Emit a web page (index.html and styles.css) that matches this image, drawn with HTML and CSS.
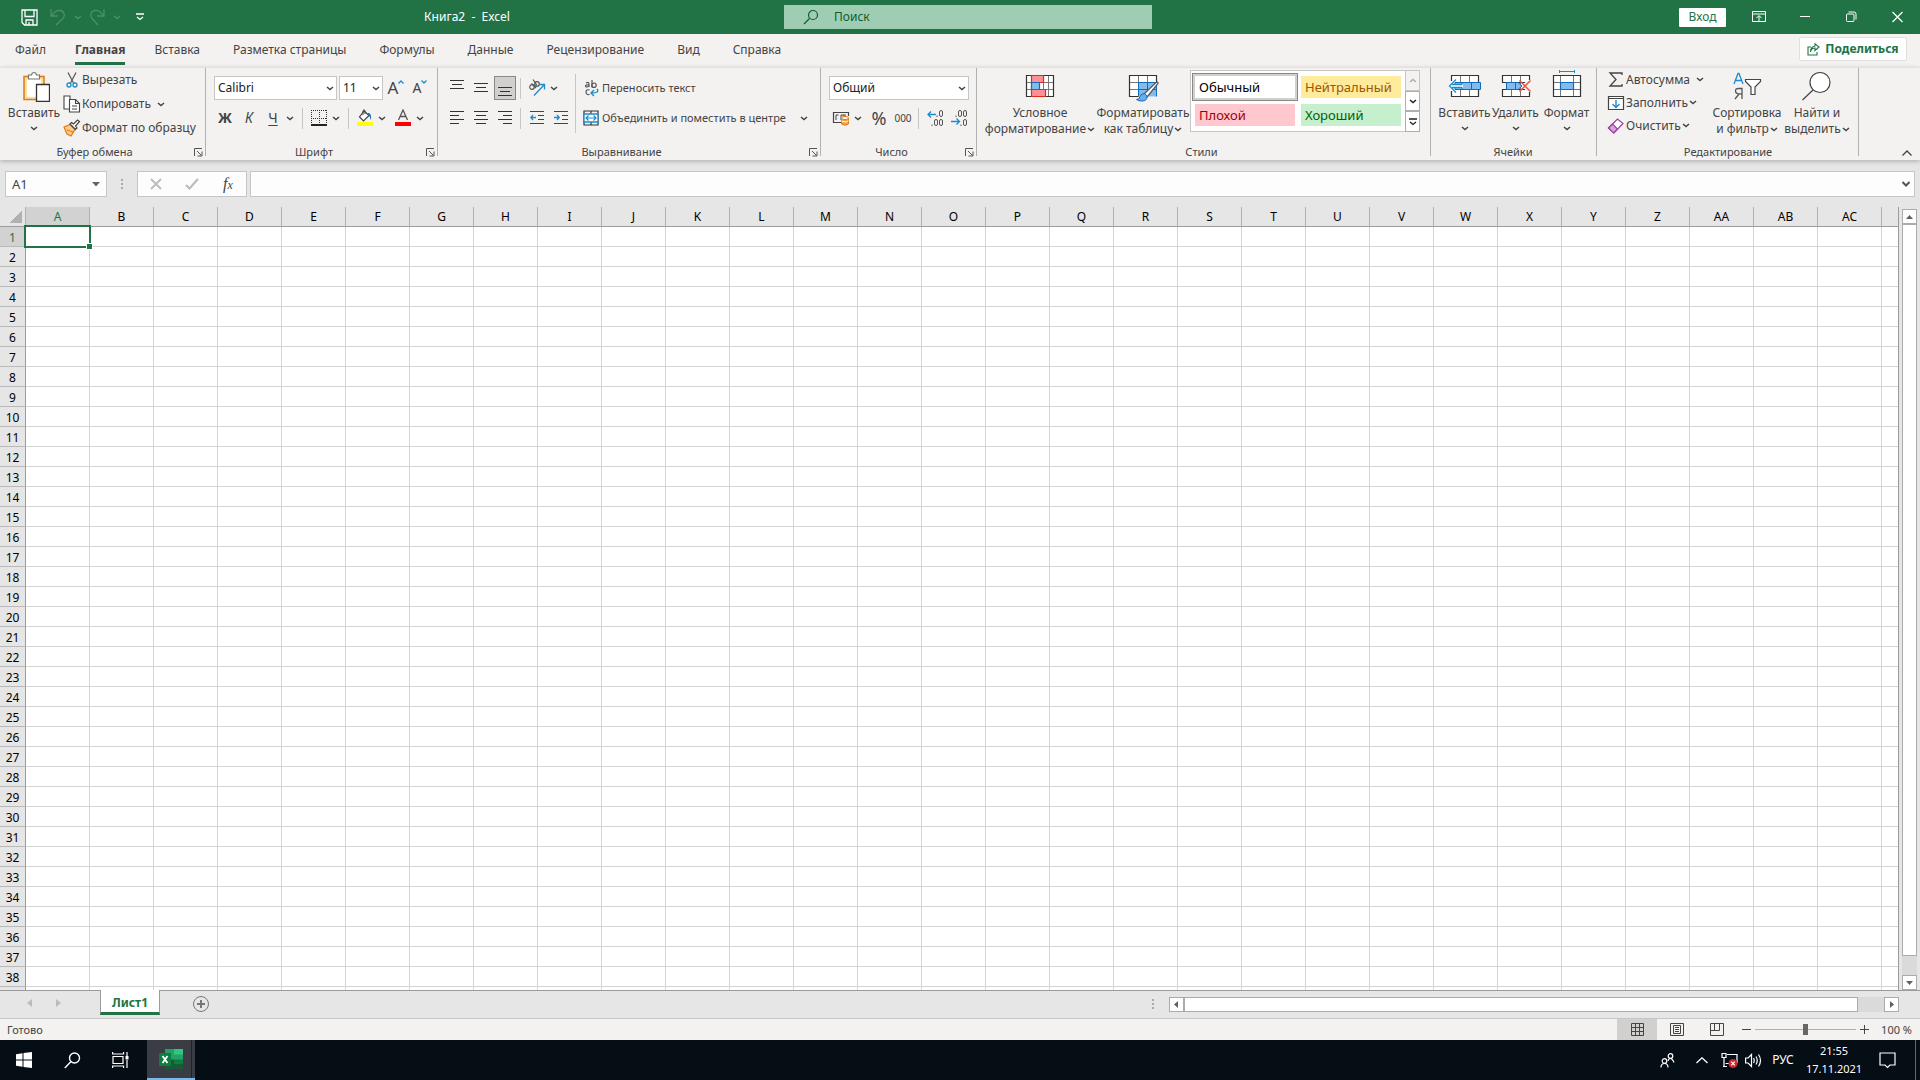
FILE: index.html
```html
<!DOCTYPE html>
<html lang="ru">
<head>
<meta charset="utf-8">
<title>Книга2 - Excel</title>
<link rel="stylesheet" href="styles.css">
</head>
<body>
<svg class="defs" aria-hidden="true">
  <symbol id="chev" viewBox="0 0 8 5"><path d="M1 1l3 2.500 3-2.500" fill="none" stroke="currentColor" stroke-width="1.500"/></symbol>
  <symbol id="launch" viewBox="0 0 9 9"><path d="M.5 8V.5H8M3 3l4.500 4.500M8 3.500V8H3.500" fill="none" stroke="#555"/></symbol>
</svg>

<header class="titlebar">
  <div class="title-left">
    <div class="qat">
      <button class="qbtn" aria-label="Сохранить"><svg width="17" height="17" viewBox="0 0 17 17" fill="none" stroke="#fff" stroke-width="1.300"><path d="M1 1h15v15H3.500L1 13.500zM4 1v6.500h9V1M5 16v-5h7v5M8 13v3"/></svg></button>
      <button class="qbtn dim" aria-label="Отменить"><svg width="16" height="18" viewBox="0 0 16 18" fill="none" stroke="currentColor" stroke-width="1.300"><path d="M1 1v7h7M1.500 7.500C5 3 8 2 10.500 2.500c4 1 5 5 2.500 8L6 17"/></svg></button>
      <button class="qdrop dim" aria-label="Список отмены"><svg width="8" height="5"><use href="#chev"/></svg></button>
      <button class="qbtn dim" aria-label="Повторить"><svg width="16" height="18" viewBox="0 0 16 18" fill="none" stroke="currentColor" stroke-width="1.300"><path d="M15 1v7H8M14.500 7.500C11 3 8 2 5.500 2.500c-4 1-5 5-2.500 8L9 17"/></svg></button>
      <button class="qdrop dim" aria-label="Список повтора"><svg width="8" height="5"><use href="#chev"/></svg></button>
      <button class="qdrop more" aria-label="Настройка панели"><svg width="8" height="8" viewBox="0 0 8 8" fill="none" stroke="#fff" stroke-width="1.300"><path d="M0 1h8M1 4l3 2.500L7 4"/></svg></button>
    </div>
    <h1 class="doc-title">Книга2&nbsp; -&nbsp; Excel</h1>
  </div>
  <label class="search">
    <svg width="16" height="16" viewBox="0 0 16 16" fill="none" stroke="#0e5c2f" stroke-width="1.200"><circle cx="10" cy="6" r="4.500"/><path d="M6.500 9.500L1 15"/></svg>
    <input type="search" placeholder="Поиск" aria-label="Поиск">
  </label>
  <div class="title-right">
    <button class="login">Вход</button>
    <button class="wbtn" aria-label="Параметры ленты"><svg width="14" height="12" viewBox="0 0 14 12" fill="none" stroke="#fff"><path d="M.5.5h13v10H.5zM.5 3h13M7 10V5M4.500 7L7 4.500 9.500 7"/></svg></button>
    <button class="wbtn" aria-label="Свернуть"><svg width="10" height="12" viewBox="0 0 10 12" stroke="#fff"><path d="M0 5.500h10"/></svg></button>
    <button class="wbtn" aria-label="Восстановить"><svg width="11" height="12" viewBox="0 0 11 12" fill="none" stroke="#fff"><rect x=".5" y="3" width="7.500" height="7.500" rx="1"/><path d="M2.500 1H8q2 0 2 2v5.500"/></svg></button>
    <button class="wbtn" aria-label="Закрыть"><svg width="11" height="12" viewBox="0 0 11 12" stroke="#fff" stroke-width="1.200"><path d="M.5 1l10 10M10.500 1l-10 10"/></svg></button>
  </div>
</header>

<nav class="tabs">
  <a href="#file">Файл</a>
  <a href="#home" class="active">Главная</a>
  <a href="#insert">Вставка</a>
  <a href="#layout">Разметка страницы</a>
  <a href="#formulas">Формулы</a>
  <a href="#data">Данные</a>
  <a href="#review">Рецензирование</a>
  <a href="#view">Вид</a>
  <a href="#help">Справка</a>
  <button class="share"><svg width="13" height="13" viewBox="0 0 13 13" fill="none" stroke="#217346" stroke-width="1.100"><path d="M4 4H1v8h9V9M3.500 9C4 6 5.500 5 8 5V7.500L12 4 8 .8V3C5 3.500 3.500 5.500 3.500 9z"/></svg>Поделиться</button>
</nav>

<main class="ribbon">
  <section class="group g-clip">
    <div class="body">
      <button class="big w56">
        <svg class="art" width="32" height="32" viewBox="0 0 32 32"><path d="M6 6.500h20v23H6z" fill="#fddfa0" stroke="#e07a12" stroke-width="1.500"/><path d="M9 9h14v18H9z" fill="#fff"/><path d="M10.500 9V5h3q.5-2.500 2.500-2.500T18.500 5h3v4z" fill="#fff" stroke="#777" stroke-width="1.200"/><path d="M18.500 14.500h13v17h-13z" fill="#fff" stroke="#333" stroke-width="1.300"/></svg>
        <span>Вставить</span><svg class="chev" width="8" height="5"><use href="#chev"/></svg>
      </button>
      <div class="stack clip">
        <button class="row"><svg width="18" height="18" viewBox="0 0 18 18" fill="none"><path d="M5 1.500l5.500 10.500M13 1.500L7.500 12" stroke="#555" stroke-width="1.200"/><circle cx="6" cy="14" r="2" stroke="#1e8bcd" stroke-width="1.300"/><circle cx="12" cy="14" r="2" stroke="#1e8bcd" stroke-width="1.300"/></svg>Вырезать</button>
        <button class="row"><svg width="18" height="18" viewBox="0 0 18 18" fill="#fff" stroke="#444" stroke-width="1.100"><path d="M1 1h6v13H1z"/><path d="M6.500 4.500h6l4 4v8.500h-10z"/><path d="M12.500 4.500v4h4M9 11h5M9 14h5" fill="none"/></svg>Копировать<svg class="chev near" width="8" height="5"><use href="#chev"/></svg></button>
        <button class="row"><svg width="18" height="18" viewBox="0 0 18 18"><path d="M1 8l6-2.500 5 5-4 6.500-4-2z" fill="#fdc98a" stroke="#e07a12" stroke-width="1.200"/><path d="M4 11l6 2" stroke="#e07a12"/><path d="M7 5l5.500 5.500 1.500-1.500-1.500-2 4-4.500L14.500 1l-4 4-2-1.500z" fill="#fff" stroke="#444" stroke-width="1.200"/></svg>Формат по образцу</button>
      </div>
    </div>
    <footer class="with-launch">Буфер обмена<button class="launch" aria-label="Параметры буфера"><svg width="9" height="9"><use href="#launch"/></svg></button></footer>
  </section>

  <section class="group g-font">
    <div class="body rows">
      <div class="line">
        <span class="combo w123"><select aria-label="Шрифт"><option>Calibri</option></select><svg class="chev" width="8" height="5"><use href="#chev"/></svg></span>
        <span class="combo w44"><select aria-label="Размер"><option>11</option></select><svg class="chev" width="8" height="5"><use href="#chev"/></svg></span>
        <button class="ib size-up" aria-label="Увеличить шрифт"><b>A</b><svg width="6" height="4" viewBox="0 0 6 4" fill="none" stroke="#1e8bcd" stroke-width="1.300"><path d="M.5 3.500L3 1l2.500 2.500"/></svg></button>
        <button class="ib size-down" aria-label="Уменьшить шрифт"><b>A</b><svg width="6" height="4" viewBox="0 0 6 4" fill="none" stroke="#1e8bcd" stroke-width="1.300"><path d="M.5.5L3 3 5.500.5"/></svg></button>
      </div>
      <div class="line">
        <button class="ib bold">Ж</button><button class="ib ital">К</button><button class="ib und">Ч</button><button class="dd" aria-label="Подчёркивание"><svg width="8" height="5"><use href="#chev"/></svg></button>
        <i class="sep"></i>
        <button class="ib" aria-label="Границы"><svg width="16" height="16" viewBox="0 0 16 16" fill="none" stroke="#333" shape-rendering="crispEdges"><path d="M0 .5h16M.5 0v15M15.500 0v15M8.500 0v15M0 8.500h16" stroke-dasharray="1 1"/><path d="M0 15h16" stroke="#222" stroke-width="2"/></svg></button><button class="dd" aria-label="Виды границ"><svg width="8" height="5"><use href="#chev"/></svg></button>
        <i class="sep"></i>
        <button class="ib" aria-label="Цвет заливки"><svg width="16" height="18" viewBox="0 0 16 18"><path d="M7 2L2.500 8l4 4L12 6.500z" fill="#fff" stroke="#444" stroke-width="1.200"/><path d="M6 6V1.500Q7 0 8 1.500V5" fill="none" stroke="#444"/><path d="M11 4c2.500 0 3.500 2 3 7-1.500-3-1-4-3-5z" fill="#1e6fb8"/><path d="M0 13h16v4H0z" fill="#ff0"/></svg></button><button class="dd" aria-label="Цвета заливки"><svg width="8" height="5"><use href="#chev"/></svg></button>
        <button class="ib" aria-label="Цвет текста"><svg width="16" height="18" viewBox="0 0 16 18"><path d="M3.500 11L8 1l4.500 10M5 7.500h6" fill="none" stroke="#555" stroke-width="1.300"/><path d="M0 13h16v4H0z" fill="red"/></svg></button><button class="dd" aria-label="Цвета текста"><svg width="8" height="5"><use href="#chev"/></svg></button>
      </div>
    </div>
    <footer class="with-launch">Шрифт<button class="launch" aria-label="Параметры шрифта"><svg width="9" height="9"><use href="#launch"/></svg></button></footer>
  </section>

  <section class="group g-align">
    <div class="body">
      <div class="rows">
        <div class="line">
          <button class="ib" aria-label="По верхнему краю"><svg class="crisp" width="14" height="18"><path d="M0 1.500h14M2 5.500h10M0 9.500h14"/></svg></button>
          <button class="ib" aria-label="По середине"><svg class="crisp" width="14" height="18"><path d="M0 4.500h14M2 8.500h10M0 12.500h14"/></svg></button>
          <button class="ib on" aria-label="По нижнему краю"><svg class="crisp" width="14" height="18"><path d="M0 8.500h14M2 12.500h10M0 16.500h14"/></svg></button>
          <i class="sep"></i>
          <button class="ib" aria-label="Ориентация"><svg width="18" height="18" viewBox="0 0 18 18" fill="none"><g stroke="#555" stroke-width="1.200"><circle cx="4" cy="8" r="2.300"/><path d="M3.500 4.500L8 9"/><circle cx="9" cy="5" r="2.300"/><path d="M5 .5l4 6"/></g><path d="M6 16.500L16 6M11.500 5.500H16.500V10.500" stroke="#1e8bcd" stroke-width="1.300"/></svg></button><button class="dd" aria-label="Варианты ориентации"><svg width="8" height="5"><use href="#chev"/></svg></button>
        </div>
        <div class="line">
          <button class="ib" aria-label="По левому краю"><svg class="crisp" width="14" height="14"><path d="M0 .5h14M0 4.500h9M0 8.500h14M0 12.500h9"/></svg></button>
          <button class="ib" aria-label="По центру"><svg class="crisp" width="14" height="14"><path d="M0 .5h14M2 4.500h10M0 8.500h14M2 12.500h10"/></svg></button>
          <button class="ib" aria-label="По правому краю"><svg class="crisp" width="14" height="14"><path d="M0 .5h14M5 4.500h9M0 8.500h14M5 12.500h9"/></svg></button>
          <i class="sep"></i>
          <button class="ib" aria-label="Уменьшить отступ"><svg width="14" height="14" viewBox="0 0 14 14" fill="none" stroke="#444"><path d="M0 .5h14M8 4.500h6M8 8.500h6M0 12.500h14"/><path d="M1 6.500h5M3 4L.8 6.500 3 9" stroke="#1e8bcd" stroke-width="1.300"/></svg></button>
          <button class="ib" aria-label="Увеличить отступ"><svg width="14" height="14" viewBox="0 0 14 14" fill="none" stroke="#444"><path d="M0 .5h14M8 4.500h6M8 8.500h6M0 12.500h14"/><path d="M0 6.500h5M3 4l2.200 2.500L3 9" stroke="#1e8bcd" stroke-width="1.300"/></svg></button>
        </div>
      </div>
      <i class="long-sep"></i>
      <div class="rows wide">
        <button class="row"><svg width="17" height="18" viewBox="0 0 17 18" fill="none" stroke="#555" stroke-width="1.200"><path d="M3 4q3-1.500 3 1v3M6 6q-3.500-.5-3.500 1T6 7.500M9 1v7.500"/><circle cx="11" cy="6.200" r="2.200"/><path d="M6.500 11Q3 10 3 13t3.500 2.500"/><path d="M14 10q3 4-5.500 4M11 11l-3 3 3 3" stroke="#1e8bcd" stroke-width="1.400"/></svg>Переносить текст</button>
        <button class="row"><svg width="17" height="16" viewBox="0 0 17 16" fill="none"><path d="M1 1h14v14H1zM8 1v3M8 12v3" stroke="#333" stroke-width="1.200"/><path d="M1 4h14v8H1z" fill="#fff" stroke="#1e8bcd" stroke-width="1.300"/><path d="M3 8h10M5.500 5.500L3 8l2.500 2.500M10.500 5.500L13 8l-2.500 2.500" stroke="#1e8bcd" stroke-width="1.200"/></svg>Объединить и поместить в центре<svg class="chev far" width="8" height="5"><use href="#chev"/></svg></button>
      </div>
    </div>
    <footer class="with-launch">Выравнивание<button class="launch" aria-label="Параметры выравнивания"><svg width="9" height="9"><use href="#launch"/></svg></button></footer>
  </section>

  <section class="group g-num">
    <div class="body rows">
      <div class="line">
        <span class="combo w140"><select aria-label="Числовой формат"><option>Общий</option></select><svg class="chev" width="8" height="5"><use href="#chev"/></svg></span>
      </div>
      <div class="line">
        <button class="ib" aria-label="Денежный формат"><svg width="18" height="16" viewBox="0 0 18 16" fill="none"><path d="M9 12.500H1.500v-10h15V6" stroke="#444" stroke-width="1.200"/><path d="M6.500 5H4v5M9 10V5h3v2M12 5h2" stroke="#444"/><path d="M9.500 8v6q4 2.500 7 0V8" fill="#f7a04b" stroke="#e07a12"/><ellipse cx="13" cy="8" rx="3.500" ry="1.500" fill="#fff" stroke="#e07a12"/><path d="M9.500 11q4 2 7 0" stroke="#fff"/></svg></button><button class="dd" aria-label="Валюты"><svg width="8" height="5"><use href="#chev"/></svg></button>
        <button class="ib percent">%</button><button class="ib zeros">000</button>
        <i class="sep"></i>
        <button class="ib digits" aria-label="Увеличить разрядность"><svg width="17" height="16" viewBox="0 0 17 16" fill="none" stroke="#555"><rect x="12.500" y=".5" width="3" height="6" rx="1.500"/><rect x="7.500" y="9.500" width="3" height="6" rx="1.500"/><rect x="12.500" y="9.500" width="3" height="6" rx="1.500"/><path d="M5 14.500v1.500M10 5.500V7"/><path d="M1 4.500h8M4 1.500l-3 3 3 3" stroke="#1e8bcd" stroke-width="1.300"/></svg></button>
        <button class="ib digits" aria-label="Уменьшить разрядность"><svg width="17" height="16" viewBox="0 0 17 16" fill="none" stroke="#555"><rect x="7.500" y=".5" width="3" height="6" rx="1.500"/><rect x="12.500" y=".5" width="3" height="6" rx="1.500"/><rect x="12.500" y="9.500" width="3" height="6" rx="1.500"/><path d="M5 5.500V7M10 14.500v1.500"/><path d="M0 11.500h8M5.500 8.500l3 3-3 3" stroke="#1e8bcd" stroke-width="1.300"/></svg></button>
      </div>
    </div>
    <footer class="with-launch">Число<button class="launch" aria-label="Параметры числа"><svg width="9" height="9"><use href="#launch"/></svg></button></footer>
  </section>

  <section class="group g-styles">
    <div class="body">
      <button class="big w116">
        <svg class="art" width="32" height="32" viewBox="0 0 32 32" fill="none"><path d="M2.500 5.500h27v21h-27z" fill="#fff"/><path d="M7.500 5.500v21M19.500 5.500v21M24.500 5.500v21M2.500 12.500h27M2.500 19.500h27" stroke="#777"/><path d="M2.500 5.500h27v21h-27z" stroke="#333" stroke-width="1.200"/><path d="M7.500 5.500h12v7h-12zM7.500 19.500h14v7h-14z" fill="#ff9098" stroke="#e0281e" stroke-width="1.200"/><path d="M7.500 12.500h8v7h-8z" fill="#83bbec" stroke="#0f6cbd" stroke-width="1.200"/></svg>
        <span>Условное</span><span>форматирование<svg class="chev in" width="8" height="5"><use href="#chev"/></svg></span>
      </button>
      <button class="big w90">
        <svg class="art" width="32" height="32" viewBox="0 0 32 32" fill="none"><path d="M2.500 5.500h27v21h-27z" fill="#fff"/><path d="M11.500 12.500h18v14h-18z" fill="#83bbec"/><path d="M11.500 5.500v21M20.500 5.500v21M2.500 12.500h27M2.500 19.500h27" stroke="#777"/><path d="M11.500 26V12.500h18v14M20.500 12.500v14M11.500 19.500h18" stroke="#0f6cbd"/><path d="M29.500 12V5.500h-27v21h9" stroke="#333" stroke-width="1.200"/><path d="M17 24L29 12.500q2.500-1 2 1L20 27z" fill="#fff" stroke="#555" stroke-width="1.200"/><path d="M9.500 29.500q3 0 3.500-3t5-3l2 3q0 4.500-5 4.500-3.500 0-5.500-1.500z" fill="#6aaee6" stroke="#0f6cbd"/></svg>
        <span>Форматировать</span><span>как таблицу<svg class="chev in" width="8" height="5"><use href="#chev"/></svg></span>
      </button>
      <div class="gallery">
        <div class="swatches">
          <button class="sw normal">Обычный</button><button class="sw neutral">Нейтральный</button>
          <button class="sw bad">Плохой</button><button class="sw good">Хороший</button>
        </div>
        <div class="scrollers">
          <button class="off" aria-label="Вверх"><svg class="flip" width="8" height="5"><use href="#chev"/></svg></button>
          <button aria-label="Вниз"><svg width="8" height="5"><use href="#chev"/></svg></button>
          <button aria-label="Дополнительно"><svg width="8" height="8" viewBox="0 0 8 8" fill="none" stroke="#222" stroke-width="1.300"><path d="M0 1h8M1 4l3 2.500L7 4"/></svg></button>
        </div>
      </div>
    </div>
    <footer>Стили</footer>
  </section>

  <section class="group g-cells">
    <div class="body">
      <button class="big w50">
        <svg class="art" width="34" height="32" viewBox="0 0 34 32" fill="none"><path d="M3.500 5.500h27v21h-27z" fill="#fff"/><path d="M12.500 5.500v21M21.500 5.500v21" stroke="#777"/><path d="M3.500 11V5.500h27V12M3.500 21v5.500h27V20" stroke="#333" stroke-width="1.200"/><path d="M7 12.500h25.500v7H7z" fill="#83bbec" stroke="#0f6cbd"/><path d="M23.500 12.500v7M14 12.500v7" stroke="#0f6cbd"/><path d="M15 14.500H6V10l-5 6 5 6v-4.500h9z" fill="#fff"/><path d="M14 17.500H4M14 14.500H4M8 9.500L1.500 16 8 22.500" stroke="#1e8bcd" stroke-width="1.300"/></svg>
        <span>Вставить</span><svg class="chev" width="8" height="5"><use href="#chev"/></svg>
      </button>
      <button class="big w50">
        <svg class="art" width="34" height="32" viewBox="0 0 34 32" fill="none"><path d="M3.500 5.500h27v21h-27z" fill="#fff"/><path d="M12.500 5.500v21M21.500 5.500v21" stroke="#777"/><path d="M3 12.500h28M3 19.500h28" stroke="#333"/><path d="M3.500 12.500v-7h27V10M3.500 20v6.500h27V22" stroke="#333" stroke-width="1.200"/><path d="M0 13h7v6H0zM26 11h8v10h-8z" fill="#f3f2f1"/><path d="M7.500 12.500H19l4 3.500-4 3.500H7.500zM16.500 12.500v7" fill="#83bbec" stroke="#0f6cbd"/><path d="M20.500 10.500l11 11M31.500 10.500l-11 11" stroke="#e8504a" stroke-width="1.500"/></svg>
        <span>Удалить</span><svg class="chev" width="8" height="5"><use href="#chev"/></svg>
      </button>
      <button class="big w50">
        <svg class="art" width="34" height="32" viewBox="0 0 34 32" fill="none"><path d="M3.500 5.500h27v21h-27z" fill="#fff"/><path d="M10.500 5.500v21M23.500 5.500v21M3.500 12.500h27M3.500 19.500h27" stroke="#777"/><path d="M3.500 5.500h27v21h-27z" stroke="#333" stroke-width="1.200"/><path d="M10.500 12.500h13v7h-13z" fill="#83bbec" stroke="#0f6cbd" stroke-width="1.200"/><path d="M9.500 1.500h15M9.500 0v3M24.500 0v3" stroke="#1e8bcd"/></svg>
        <span>Формат</span><svg class="chev" width="8" height="5"><use href="#chev"/></svg>
      </button>
    </div>
    <footer>Ячейки</footer>
  </section>

  <section class="group g-edit">
    <div class="body">
      <div class="stack edit">
        <button class="row"><svg width="18" height="18" viewBox="0 0 18 18" fill="none" stroke="#444" stroke-width="1.300"><path d="M15 4V2H3l6 6.500L3 15h12v-2"/></svg>Автосумма<svg class="chev near" width="8" height="5"><use href="#chev"/></svg></button>
        <button class="row"><svg width="18" height="18" viewBox="0 0 18 18" fill="none"><path d="M1.500 2.500h15v13h-15z" fill="#fff" stroke="#444" stroke-width="1.200"/><path d="M1.500 4.500h15" stroke="#444"/><path d="M9 6v7.500M5.500 10L9 13.500 12.500 10" stroke="#1e8bcd" stroke-width="1.400"/></svg>Заполнить<svg class="chev" width="8" height="5"><use href="#chev"/></svg></button>
        <button class="row"><svg width="18" height="18" viewBox="0 0 18 18"><path d="M1.500 11l9-9 5.500 4.500-9 9.500z" fill="#fff" stroke="#9b3fa0" stroke-width="1.200"/><path d="M1.500 11l4-4 5 5-4 4z" fill="#d9a3dc" stroke="#9b3fa0" stroke-width="1.200"/></svg>Очистить<svg class="chev" width="8" height="5"><use href="#chev"/></svg></button>
      </div>
      <button class="big w70">
        <svg class="art" width="32" height="32" viewBox="0 0 32 32" fill="none"><path d="M3 14L7 3.500h1L12 14M4.500 10.500h6" stroke="#1e8bcd" stroke-width="1.300"/><path d="M11 29V18.500H7.500Q4.500 18.500 4.500 21t3 2.800H11M8 24l-4 5" stroke="#555" stroke-width="1.300"/><path d="M14.500 9.500h15v2L24 17v7.500h-4V17l-5.500-5.500z" fill="#fff" stroke="#444" stroke-width="1.200"/></svg>
        <span>Сортировка</span><span>и фильтр<svg class="chev in" width="8" height="5"><use href="#chev"/></svg></span>
      </button>
      <button class="big w70">
        <svg class="art" width="32" height="32" viewBox="0 0 32 32" fill="none" stroke="#444" stroke-width="1.200"><circle cx="19" cy="12.500" r="10" fill="#fff"/><path d="M12 20L1.500 30"/></svg>
        <span>Найти и</span><span>выделить<svg class="chev in" width="8" height="5"><use href="#chev"/></svg></span>
      </button>
    </div>
    <footer>Редактирование</footer>
  </section>
  <button class="collapse" aria-label="Свернуть ленту"><svg width="10" height="6" viewBox="0 0 10 6" fill="none" stroke="#444" stroke-width="1.300"><path d="M.5 5.500L5 1l4.500 4.500"/></svg></button>
</main>

<div class="formula-row">
  <div class="namebox"><input value="A1" aria-label="Имя ячейки"><button aria-label="Список имён"><svg width="8" height="5"><path d="M0 0h8L4 4.500z" fill="#666"/></svg></button></div>
  <i class="dots"></i>
  <div class="fx">
    <button aria-label="Отмена"><svg width="12" height="12" viewBox="0 0 12 12" stroke="#bbb" stroke-width="1.800"><path d="M1 1l10 10M11 1L1 11"/></svg></button>
    <button aria-label="Ввод"><svg width="14" height="12" viewBox="0 0 14 12" fill="none" stroke="#bbb" stroke-width="2"><path d="M1 7l3.500 3.500L13 1"/></svg></button>
    <button class="fn" aria-label="Вставить функцию"><em>f<small>x</small></em></button>
  </div>
  <div class="formula"><input aria-label="Строка формул"><button aria-label="Развернуть"><svg width="8" height="6" viewBox="0 0 8 6" fill="none" stroke="#555" stroke-width="2"><path d="M.5 1L4 4.500 7.500 1"/></svg></button></div>
</div>

<div class="sheet">
  <div class="viewport"><table class="grid"><thead></thead><tbody></tbody></table></div>
  <div class="vscroll">
    <button aria-label="Вверх"><svg width="7" height="4"><path d="M0 4h7L3.500 0z" fill="#606060"/></svg></button>
    <div class="vtrack"><div class="vthumb"></div></div>
    <button aria-label="Вниз"><svg width="7" height="4"><path d="M0 0h7L3.500 4z" fill="#606060"/></svg></button>
  </div>
</div>

<div class="sheetbar">
  <div class="sheet-nav">
    <button aria-label="Предыдущий лист"><svg width="5" height="8"><path d="M5 0v8L0 4z" fill="#bbb"/></svg></button>
    <button aria-label="Следующий лист"><svg width="5" height="8"><path d="M0 0v8l5-4z" fill="#bbb"/></svg></button>
  </div>
  <button class="sheet-tab">Лист1</button>
  <button class="add" aria-label="Новый лист"><svg width="16" height="16" viewBox="0 0 16 16" fill="none" stroke="#777"><circle cx="8" cy="8" r="7.500"/><path d="M4 8h8M8 4v8" stroke-width="2"/></svg></button>
  <i class="dots"></i>
  <div class="hscroll">
    <button aria-label="Влево"><svg width="4" height="7"><path d="M4 0v7L0 3.500z" fill="#606060"/></svg></button>
    <div class="htrack"><div class="hthumb"></div></div>
    <button aria-label="Вправо"><svg width="4" height="7"><path d="M0 0v7l4-3.500z" fill="#606060"/></svg></button>
  </div>
</div>

<div class="status">
  <span class="ready">Готово</span>
  <button class="view on" aria-label="Обычный"><svg width="13" height="13" fill="none" stroke="#444"><path d="M.5.5h12v12H.5zM4.500.5v12M8.500.5v12M.5 4.500h12M.5 8.500h12"/></svg></button>
  <button class="view" aria-label="Разметка страницы"><svg width="14" height="13" fill="none" stroke="#444"><path d="M.5.5h13v12H.5zM3.500 2.500h7v8h-7zM5 4.500h4M5 6.500h4M5 8.500h4"/></svg></button>
  <button class="view" aria-label="Страничный режим"><svg width="14" height="13" fill="none" stroke="#444"><path d="M.5.5h13v12H.5zM4.500.5v7h5v-7M.5 7.500h5"/></svg></button>
  <button class="step" aria-label="Уменьшить"><svg width="9" height="9" stroke="#444"><path d="M0 4.500h9"/></svg></button>
  <input class="zoom" type="range" min="0" max="100" value="50" aria-label="Масштаб">
  <button class="step" aria-label="Увеличить"><svg width="9" height="9" stroke="#444"><path d="M0 4.500h9M4.500 0v9"/></svg></button>
  <span class="pct">100 %</span>
</div>

<footer class="taskbar">
  <button class="tb" aria-label="Пуск"><svg width="16" height="16" viewBox="0 0 16 16" fill="#fff"><path d="M0 2.200l6.500-1v6.300H0zM7.500 1L16 0v7.500H7.500zM0 8.500h6.500v6.300l-6.500-1zM7.500 8.500H16V16l-8.500-1z"/></svg></button>
  <button class="tb" aria-label="Поиск"><svg width="17" height="17" viewBox="0 0 17 17" fill="none" stroke="#fff" stroke-width="1.400"><circle cx="10.500" cy="6" r="5"/><path d="M7 9.500L.8 16"/></svg></button>
  <button class="tb" aria-label="Представление задач"><svg width="17" height="16" viewBox="0 0 17 16" fill="none" stroke="#fff" stroke-width="1.200"><path d="M1 4.500h10v7H1zM.6 0v2h11V0M.6 16v-2h11v2M15 0v4M15 8v8"/><path d="M13.500 4h3v3.500h-3z" fill="#fff" stroke="none"/></svg></button>
  <button class="tb app" aria-label="Excel"><svg width="24" height="22" viewBox="0 0 24 22"><path d="M6 1h18v20H6z" fill="#21a366"/><path d="M15 1h9v5.500h-9z" fill="#33c481"/><path d="M6 11.500h9V21H6z" fill="#185c37"/><path d="M15 11.500h9V17h-9z" fill="#107c41"/><path d="M15 16h9v5h-9z" fill="#185c37"/><path d="M0 5h12v13H0z" fill="#107c41"/><path d="M3.500 8l5 7M8.500 8l-5 7" stroke="#fff" stroke-width="1.800"/></svg></button>
  <div class="tray">
    <button class="t40" aria-label="Люди"><svg width="15" height="15" viewBox="0 0 15 15" fill="none" stroke="#fff" stroke-width="1.200"><circle cx="10.500" cy="3" r="2.300"/><circle cx="4.500" cy="8" r="2.300"/><path d="M1 14.500q0-4 3.500-4t3.500 4M8 8q.5-2.500 2.500-2.500T14 9.500"/></svg></button>
    <button class="t30" aria-label="Скрытые значки"><svg width="12" height="7" viewBox="0 0 12 7" fill="none" stroke="#fff" stroke-width="1.300"><path d="M.5 6L6 .8 11.500 6"/></svg></button>
    <button class="t24" aria-label="Сеть"><svg width="17" height="16" viewBox="0 0 17 16" fill="none" stroke="#fff" stroke-width="1.200"><path d="M6 2.500h10V11M8 11.500H4.500M3 6v8.500M1 1.500h4v4H1zM2 14.500h4"/><circle cx="12" cy="11.500" r="4.500" fill="#d9232e" stroke="none"/><path d="M10.200 9.700l3.600 3.600M13.800 9.700l-3.600 3.600"/></svg></button>
    <button class="t24" aria-label="Громкость"><svg width="17" height="15" viewBox="0 0 17 15" fill="none" stroke="#fff" stroke-width="1.200"><path d="M.6 5h2.500L6.500 1.500v12L3.100 10H.6zM8.500 5q1.500 2.500 0 5M11 3.500q2.500 4 0 8M13.500 1.500q4 6 0 12"/></svg></button>
    <button class="lang">РУС</button>
    <button class="clock"><span>21:55</span><span>17.11.2021</span></button>
    <button class="t40" aria-label="Уведомления"><svg width="17" height="17" viewBox="0 0 17 17" fill="none" stroke="#fff" stroke-width="1.200"><path d="M1 1h15v12h-5L8.500 15.500 6 13H1z"/></svg></button>
    <button class="peek" aria-label="Свернуть все окна"></button>
  </div>
</footer>
<script src="script.js"></script>
</body>
</html>
```
FILE: styles.css
```css
* { box-sizing: border-box; }
body {
  margin: 0;
  height: 100vh;
  display: flex;
  flex-direction: column;
  overflow: hidden;
  font: 12px/16px "Noto Sans", "Open Sans", sans-serif;
  color: #444;
  background: #e6e6e6;
}
button, input, select { font: inherit; color: inherit; margin: 0; }
button { border: 0; padding: 0; background: none; display: flex; align-items: center; justify-content: center; white-space: nowrap; }
input { border: 0; padding: 0; background: none; outline: 0; min-width: 0; }
svg { display: block; flex: none; }
.defs { position: absolute; width: 0; height: 0; }

/* title bar */
.titlebar { display: grid; grid-template-columns: minmax(0, 784fr) 368px minmax(0, 768fr); height: 34px; background: #217346; color: #fff; flex: none; align-items: center; }
.title-left { display: flex; align-items: center; }
.qat { display: flex; padding-left: 17px; width: 150px; align-items: center; }
.qbtn { width: 24px; height: 34px; }
.qbtn + .qbtn { margin-left: 5px; }
.qdrop { width: 15px; height: 34px; }
.qdrop.more { margin-left: 8px; }
.dim { color: #4a8f69; }
.doc-title { flex: 1; margin: 0; font-size: 12px; line-height: 32px; font-weight: 400; text-align: center; }
.search { display: flex; align-items: center; height: 24px; padding-left: 19px; gap: 15px; background: #9fcdb3; color: #0e5c2f; }
.search input { flex: 1; }
.search input::placeholder { color: #0e5c2f; opacity: 1; }
.title-right { display: flex; justify-content: flex-end; align-items: center; }
.login { width: 47px; height: 19px; background: #fff; color: #217346; margin-right: 10px; border-radius: 1px; }
.wbtn { width: 46px; height: 34px; }

/* tabs */
.tabs { display: flex; height: 34px; flex: none; padding: 3px 13px 0 15px; gap: 33px; align-items: flex-start; background: #f3f2f1; }
.tabs a { color: #444; text-decoration: none; line-height: 26px; height: 28px; border-bottom: 3px solid transparent; }
.tabs a.active { font-weight: 700; border-color: #217346; margin: 0 -4px; }
.share { margin-left: auto; width: 108px; height: 24px; gap: 5px; border: 1px solid #e1dfdd; border-radius: 2px; background: #fff; color: #217346; font-weight: 700; }

/* ribbon */
.ribbon { display: flex; height: 92px; flex: none; background: #f3f2f1; box-shadow: 0 1px 5px #0004; position: relative; z-index: 1; }
.group { display: flex; flex-direction: column; flex: none; background: linear-gradient(#b3b0ad, #b3b0ad) right top / 1px 88px no-repeat; }
.g-clip { width: 206px; padding-left: 6px; }
.g-font { width: 232px; padding-left: 7px; }
.g-align { width: 383px; padding-left: 7px; }
.g-num { width: 156px; padding-left: 8px; }
.g-styles { width: 454px; padding-left: 5px; }
.g-cells { width: 166px; padding-left: 8px; }
.g-edit { width: 262px; padding-left: 10px; }
.body { display: flex; height: 76px; }
.group > footer { position: relative; height: 16px; padding-right: 10px; text-align: center; font-size: 11px; }
.group > .with-launch { padding-right: 23px; }
.launch { position: absolute; right: 3px; top: 4px; }
.rows { display: flex; flex-direction: column; gap: 6px; padding-top: 8px; }
.line { display: flex; height: 24px; align-items: center; }
.wide .row { height: 24px; font-size: 11px; }
.stack { display: flex; flex-direction: column; }
.clip { padding-left: 1px; }
.clip .row { height: 24px; gap: 1px; }
.edit { width: 105px; }
.edit .row { height: 23px; gap: 1px; }
.row { justify-content: flex-start; gap: 2px; }
.far { margin-left: 12px; }
.near { margin-left: 5px; }
.big { flex-direction: column; justify-content: flex-start; height: 76px; padding-top: 2px; flex: none; }
.big .art { margin-bottom: 3px; }
.big > span { display: flex; align-items: center; line-height: 16px; }
.big > .chev { margin-top: 5px; }
.in { margin-left: 1px; }
.w56 { width: 56px; }
.w116 { width: 116px; }
.w90 { width: 90px; }
.w50 { width: 51px; }
.w70 { width: 70px; }
.combo { position: relative; height: 24px; }
.combo select { appearance: none; width: 100%; height: 100%; padding: 0 3px; border: 1px solid #c8c6c4; border-radius: 0; background: #fff; color: #222; }
.combo .chev { position: absolute; right: 3px; top: 10px; }
.w123 { width: 123px; margin-left: 1px; }
.w44 { width: 44px; margin: 0 1px 0 2px; }
.w140 { width: 140px; }
.ib { width: 24px; height: 24px; flex: none; }
.ib b { font-weight: 400; }
.ib.on { width: 22px; margin: 0 1px; background: #d2d0ce; border: 1px solid #8a8886; }
.size-up b { font-size: 17px; }
.size-down b { font-size: 14px; }
.size-up svg, .size-down svg { align-self: flex-start; margin-top: 4px; }
.bold { font-weight: 700; font-size: 14px; }
.ital { font-style: italic; font-size: 14px; }
.und { text-decoration: underline; text-underline-offset: 2px; font-size: 14px; }
.percent { font-size: 18px; }
.zeros { font-size: 10px; }
.dd { width: 14px; height: 24px; justify-content: flex-start; padding-left: 1px; }
.sep { width: 1px; height: 21px; background: #c8c6c4; margin: 0 4px 0 3px; }
.long-sep { width: 1px; height: 59px; background: #c8c6c4; margin: 6px 7px 0 2px; }
.crisp { stroke: #333; shape-rendering: crispEdges; }

.gallery { display: flex; height: 62px; margin: 2px 0 0 2px; width: 230px; border: 1px solid #c8c6c4; background: #fff; }
.swatches { display: grid; grid-template-columns: 100px 100px; grid-auto-rows: 22px; gap: 6px; padding: 5px 0 0 4px; flex: 1; }
.sw { justify-content: flex-start; padding: 0 0 1px 4px; font-size: 13px; }
.normal { background: #fff; color: #000; box-shadow: 0 0 0 2px #d2d0ce, 0 0 0 3px #8a8886; }
.neutral { background: #ffeb9c; color: #9c5700; }
.bad { background: #ffc7ce; color: #9c0006; }
.good { background: #c6efce; color: #006100; }
.scrollers { display: grid; width: 15px; margin: -1px -1px -1px 0; grid-template-rows: 21px 20px 21px; }
.scrollers button { border: 1px solid #b0aeac; background: #fff; color: #222; }
.scrollers .off { background: #f3f2f1; color: #b0aeac; border-color: #c8c6c4; }
.flip { transform: rotate(180deg); }
.collapse { margin: auto 8px 4px auto; }

/* formula row */
.formula-row { display: flex; flex: none; padding: 11px 5px 9px; height: 47px; }
.namebox, .fx, .formula { display: flex; height: 26px; border: 1px solid #c6c6c6; background: #fdfdfd; }
.namebox { width: 102px; padding-left: 6px; font-size: 13px; }
.namebox input { flex: 1; width: 60px; }
.namebox button { width: 20px; }
.dots { width: 2px; height: 10px; background: repeating-linear-gradient(#aaa 0 2px, transparent 2px 4px); }
.formula-row .dots { margin: 8px 14px 0 14px; }
.fx { width: 110px; }
.fx button { flex: 1; }
.fn em { font: italic 16px/16px "Liberation Serif", serif; }
.fn small { font-size: 12px; }
.formula { flex: 1; margin-left: 3px; }
.formula input { flex: 1; }
.formula button { width: 17px; }

/* sheet */
.sheet { display: flex; flex: 1; min-height: 0; }
.viewport { flex: 1; overflow: hidden; border-right: 1px solid #9b9b9b; min-width: 0; }
.grid { table-layout: fixed; border-collapse: separate; border-spacing: 0; }
.grid th, .grid td { padding: 0; height: 20px; line-height: 19px; }
.grid td { border-right: 1px solid #d4d4d4; border-bottom: 1px solid #d4d4d4; background: #fff; }
.grid th { font-weight: 400; color: #000; background: #e6e6e6; }
.grid thead th { border-right: 1px solid #b1b1b1; border-bottom: 1px solid #9b9b9b; }
.grid tbody th { border-right: 1px solid #9b9b9b; border-bottom: 1px solid #b9b9b9; padding-top: 2px; line-height: 17px; }
.grid th.picked { background: #d2d2d2; color: #217346; }
.grid .corner { background: linear-gradient(135deg, transparent 50%, #b1b1b1 50%) 10px 4px / 12px 12px no-repeat #e6e6e6; }
.cell-on { position: relative; }
.cell-on::after { content: ""; position: absolute; inset: -2px; border: 2px solid #217346; }
.cell-on::before { content: ""; position: absolute; right: -3px; bottom: -3px; width: 5px; height: 5px; background: #217346; box-shadow: 0 0 0 1px #fff; z-index: 1; }

.vscroll { display: flex; flex-direction: column; width: 21px; padding: 2px 3px 0; }
.vscroll button { height: 15px; border: 1px solid #ababab; background: #fff; }
.vtrack { flex: 1; background: #dadada; }
.vthumb { height: 97.500%; border: 1px solid #ababab; background: #fff; }

.sheetbar { display: flex; height: 29px; flex: none; border-top: 1px solid #9b9b9b; border-bottom: 1px solid #c6c6c6; padding-right: 21px; }
.sheet-nav { display: flex; width: 100px; padding: 0 39px 4px 27px; justify-content: space-between; }
.sheet-tab { width: 60px; height: 25px; margin-top: -1px; padding-top: 4px; background: #fff; border: 1px solid #9b9b9b; border-width: 0 1px 3px; border-bottom-color: #217346; color: #217346; font-weight: 700; }
.add { width: 16px; height: 26px; margin-left: 33px; }
.sheetbar .dots { margin: 8px 15px 0 auto; }
.hscroll { display: flex; width: 38.450%; height: 15px; margin-top: 6px; }
.hscroll button { width: 15px; border: 1px solid #ababab; background: #fff; }
.htrack { flex: 1; background: #dadada; }
.hthumb { width: 96.300%; height: 100%; border: 1px solid #ababab; background: #fff; }

/* status */
.status { display: flex; height: 21px; flex: none; align-items: center; background: #f3f2f1; padding: 0 8px 0 7px; font-size: 11px; }
.ready { margin-right: auto; }
.view { width: 40px; height: 21px; }
.view.on { background: #d2d0ce; }
.step { width: 9px; height: 21px; }
.view + .step { margin-left: 5px; }
.zoom { appearance: none; width: 101px; height: 21px; margin: 0 4px; background: linear-gradient(#b0aeac, #b0aeac) center / 100% 1px no-repeat; }
.zoom::-webkit-slider-thumb { appearance: none; width: 5px; height: 11px; background: #666; }
.pct { margin-left: 12px; }

/* taskbar */
.taskbar { display: flex; height: 40px; flex: none; background: #050d15; color: #fff; }
.tb { width: 48px; height: 40px; }
.tb.app { margin-left: 3px; background: linear-gradient(#1d2228, #1d2228) 44px 0 / 1px 100% no-repeat, #3a3d43; border-bottom: 2px solid #76b9ed; }
.tray { display: flex; margin-left: auto; }
.t40 { width: 40px; }
.t30 { width: 30px; }
.t24 { width: 24px; }
.lang { width: 36px; }
.clock { width: 66px; flex-direction: column; font-size: 11px; line-height: 18px; }
.peek { width: 5px; margin-left: 8px; border-left: 1px solid #666; }
```
FILE: script.js
```js
const COLS = 30;
const ROWS = 39;
const columnName = n => (n > 26 ? 'A' + columnName(n - 26) : String.fromCharCode(64 + n));

const grid = document.querySelector('.grid');
const group = document.createElement('colgroup');
const head = ['<tr><th class="corner"></th>'];
let cols = '<col style="width:26px">';
for (let c = 1; c <= COLS; c++) {
  cols += '<col style="width:64px">';
  head.push(`<th class="${c === 1 ? 'picked' : ''}">${c < COLS ? columnName(c) : ''}</th>`);
}
group.innerHTML = cols;
grid.prepend(group);
grid.style.width = 26 + COLS * 64 + 'px';
grid.tHead.innerHTML = head.join('') + '</tr>';

let rows = '';
for (let r = 1; r <= ROWS; r++) {
  rows += `<tr><th class="${r === 1 ? 'picked' : ''}">${r < ROWS ? r : ''}</th>`;
  for (let c = 1; c <= COLS; c++) rows += r === 1 && c === 1 ? '<td class="cell-on"></td>' : '<td></td>';
  rows += '</tr>';
}
grid.tBodies[0].innerHTML = rows;
```
